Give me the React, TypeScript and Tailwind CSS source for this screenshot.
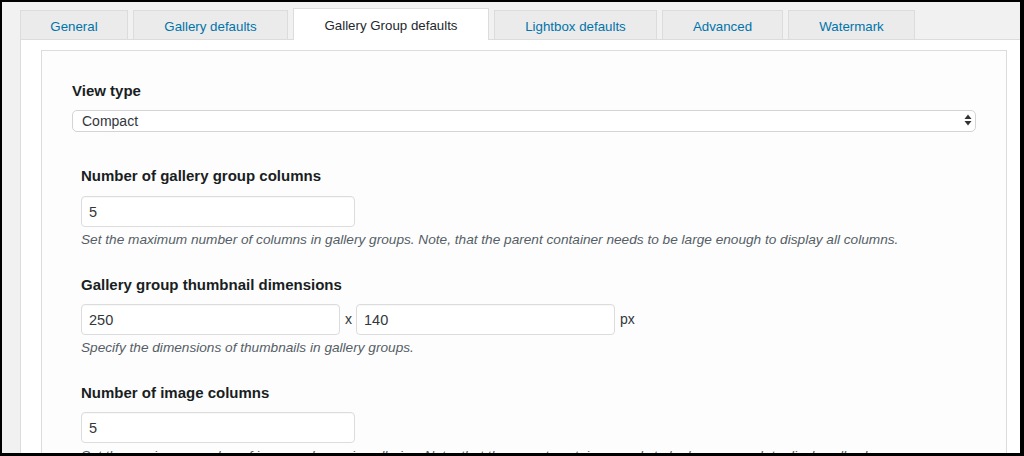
const tabs = [
  { label: 'General', w: 'w-[108px]' },
  { label: 'Gallery defaults', w: 'w-[155px]' },
  { label: 'Gallery Group defaults', w: 'w-[196px]', active: true },
  { label: 'Lightbox defaults', w: 'w-[163px]' },
  { label: 'Advanced', w: 'w-[121px]' },
  { label: 'Watermark', w: 'w-[127px]' },
]

function TextInput({ value, width = 'w-[274px]' }: { value: string; width?: string }) {
  return (
    <input
      readOnly
      value={value}
      className={`${width} h-[31px] rounded-[4px] border border-[#dcdcdc] bg-white px-[7px] text-[14.5px] text-[#32373c] shadow-[inset_0_1px_1px_rgba(0,0,0,0.03)] outline-none`}
    />
  )
}

function Label({ children }: { children: React.ReactNode }) {
  return <div className="text-[15px] font-bold leading-[20px] text-[#191e23]">{children}</div>
}

function Hint({ children }: { children: React.ReactNode }) {
  return <p className="mt-[4px] text-[13.65px] italic leading-[18px] text-[#555d66]">{children}</p>
}

export default function App() {
  return (
    <div
      className="flex h-[456px] w-[1024px] flex-col overflow-hidden border-t-2 border-r-4 border-b-[3px] border-l-2 border-black bg-[#f1f1f1] pt-[6px] pl-[18px]"
      style={{ fontFamily: '"Liberation Sans", Arial, sans-serif' }}
    >
      <div className="flex items-end gap-[5px]">
        {tabs.map(t => (
          <div
            key={t.label}
            className={`${t.w} flex items-center justify-center border border-b-0 border-[#dcdcdc] text-[13.3px] ${
              t.active
                ? 'relative z-10 h-[32px] bg-white pt-[2px] text-[#23282d]'
                : 'h-[30px] bg-[#ebebeb] pt-[3px] text-[#0073aa]'
            }`}
          >
            {t.label}
          </div>
        ))}
      </div>

      <div className="-mt-px flex-1 border-t border-l border-[#dcdcdc] bg-white pt-[10px] pl-[20px]">
        <div className="h-[420px] w-[966px] border border-[#dcdcdc] bg-[#fdfdfd] pt-[30px] pr-[30px] pl-[30px]">
          <Label>View type</Label>
          <div className="relative mt-[8px]">
            <select className="h-[22px] w-full appearance-none rounded-[5px] border border-[#d4d4d4] bg-white pl-[9px] text-[14px] text-[#32373c] outline-none">
              <option>Compact</option>
            </select>
            <svg className="pointer-events-none absolute top-[5px] right-[4px]" width="8" height="12" viewBox="0 0 8 12">
              <path d="M4 0.5 L7.5 5 L0.5 5 Z" fill="#333" />
              <path d="M4 11.5 L7.5 7 L0.5 7 Z" fill="#333" />
            </svg>
          </div>

          <div className="mt-[33px] pl-[9px]">
            <Label>Number of gallery group columns</Label>
            <div className="mt-[10px]">
              <TextInput value="5" />
            </div>
            <Hint>
              Set the maximum number of columns in gallery groups. Note, that the parent container needs to be large
              enough to display all columns.
            </Hint>

            <div className="mt-[26px]">
              <Label>Gallery group thumbnail dimensions</Label>
            </div>
            <div className="mt-[9px] flex items-center text-[14px] text-[#32373c]">
              <TextInput value="250" width="w-[259px]" />
              <span className="w-[16px] pl-[5px]">x</span>
              <TextInput value="140" width="w-[259px]" />
              <span className="pl-[5px]">px</span>
            </div>
            <Hint>Specify the dimensions of thumbnails in gallery groups.</Hint>

            <div className="mt-[26px]">
              <Label>Number of image columns</Label>
            </div>
            <div className="mt-[9px]">
              <TextInput value="5" />
            </div>
            <Hint>
              Set the maximum number of image columns in galleries. Note, that the parent container needs to be large
              enough to display all columns.
            </Hint>
          </div>
        </div>
      </div>
    </div>
  )
}
